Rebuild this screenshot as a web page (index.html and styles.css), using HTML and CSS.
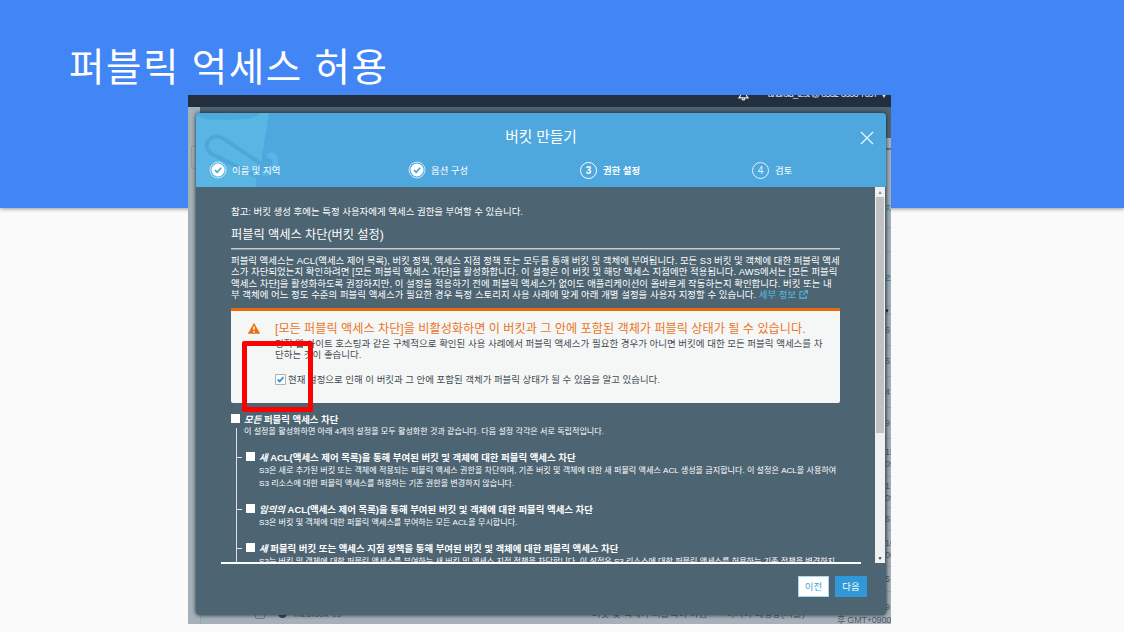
FILE: index.html
```html
<!DOCTYPE html>
<html lang="ko">
<head>
<meta charset="utf-8">
<title>퍼블릭 억세스 허용</title>
<link rel="stylesheet" href="styles.css">
</head>
<body>
<main class="slide">
  <header class="banner"><h1>퍼블릭 억세스 허용</h1></header>
  <section class="shot">
    <div class="topbar">
      <svg class="bell" viewBox="0 0 12 12"><path d="M1 7.5h10L9.3 5V1H2.7v4zM4.3 8.5a1.8 1.8 0 0 0 3.4 0" fill="none" stroke="#e6eaec" stroke-width="1.3"/></svg>
      <span class="account">android_test @ 8532-6836-7697</span><span class="caret">▼</span>
    </div>
    <div class="backdrop">
      <i class="shade"></i><i class="panel-edge"></i><i class="right-strip"></i><i class="blue-edge"></i><i class="left-control"></i>
      <div class="right-cells">
        <span class="link">지</span><span></span><span class="link">리전</span><span class="dark">▾</span><span>6</span><span>6</span><span>4</span><span>9</span><span>15<br>09</span><span>17<br>09</span><span>6</span><span>16<br>00</span><span>5</span><span>9</span>
      </div>
      <div class="bottom-row">
        <i class="row-check"></i><i class="row-bucket"></i><span class="row-name">mzblock-cs</span><span class="row-access">버킷 및 객체가 퍼블릭이 아님</span><span class="row-region">아시아 태평양(서울)</span><span class="row-time">후 GMT+0900</span>
      </div>
    </div>
    <div class="modal">
      <div class="modal-head">
        <svg class="bucket" viewBox="0 0 90 74">
          <path d="M0 0h73L65 50 60 64v10H0z" fill="#58b5e4"/>
          <path d="M0 0h63v2Q52 7 30 7 9 7 1 3z" fill="#4faadc"/>
          <path d="M64 50 28 26Q19 20 13 27T16 41L60 63" fill="none" stroke="#4da8da" stroke-width="4"/>
          <path d="M72 44q8-5 7 8 0 9-13 8" fill="none" stroke="#58b5e4" stroke-width="6"/>
        </svg>
        <h2>버킷 만들기</h2>
        <svg class="close" viewBox="0 0 14 14"><path d="m1 1 12 12M13 1 1 13" stroke="#e9f5fc" stroke-width="1.3"/></svg>
        <nav class="steps">
          <div class="step"><svg viewBox="0 0 18 18"><circle cx="9" cy="9" r="8" fill="none" stroke="#c8e6f7"/><circle cx="9" cy="9" r="6.5" fill="#fff"/><path d="m6 9 2.2 2.3 4-4.6" fill="none" stroke="#44a5dc" stroke-width="1.6"/></svg><span>이름 및 지역</span></div>
          <div class="step"><svg viewBox="0 0 18 18"><circle cx="9" cy="9" r="8" fill="none" stroke="#c8e6f7"/><circle cx="9" cy="9" r="6.5" fill="#fff"/><path d="m6 9 2.2 2.3 4-4.6" fill="none" stroke="#44a5dc" stroke-width="1.6"/></svg><span>옵션 구성</span></div>
          <div class="step current"><b>3</b><span>권한 설정</span></div>
          <div class="step upcoming"><b>4</b><span>검토</span></div>
        </nav>
      </div>
      <div class="modal-body">
        <div class="content">
          <p class="note">참고: 버킷 생성 후에는 특정 사용자에게 액세스 권한을 부여할 수 있습니다.</p>
          <h3>퍼블릭 액세스 차단(버킷 설정)</h3>
          <p class="intro">퍼블릭 액세스는 ACL(액세스 제어 목록), 버킷 정책, 액세스 지점 정책 또는 모두를 통해 버킷 및 객체에 부여됩니다. 모든 S3 버킷 및 객체에 대한 퍼블릭 액세<br><span class="wide">스가 차단되었는지 확인하려면 [모든 퍼블릭 액세스 차단]을 활성화합니다. 이 설정은 이 버킷 및 해당 액세스 지점에만 적용됩니다. AWS에서는 [모든 퍼블릭<br>액세스 차단]을 활성화하도록 권장하지만, 이 설정을 적용하기 전에 퍼블릭 액세스가 없이도 애플리케이션이 올바르게 작동하는지 확인합니다. 버킷 또는 내<br>부 객체에 어느 정도 수준의 퍼블릭 액세스가 필요한 경우 특정 스토리지 사용 사례에 맞게 아래 개별 설정을 사용자 지정할 수 있습니다.</span> <a>세부 정보 <svg viewBox="0 0 10 10"><path d="M5 2H1v7h7V6M6 .8h3.3v3.3M9 1 4.3 5.7" fill="none" stroke="#4fc0e4" stroke-width="1.2"/></svg></a></p>
          <div class="alert">
            <svg class="warn" viewBox="0 0 12 11"><path d="M6 .3 11.8 10.6H.2z" fill="#eb6f16" stroke="#eb6f16" stroke-width=".5" stroke-linejoin="round"/><path d="M6 3.6v3.5M6 8v1.5" stroke="#fff" stroke-width="1.4"/></svg>
            <div class="alert-text">
              <h4>[모든 퍼블릭 액세스 차단]을 비활성화하면 이 버킷과 그 안에 포함된 객체가 퍼블릭 상태가 될 수 있습니다.</h4>
              <p>정적 웹 사이트 호스팅과 같은 구체적으로 확인된 사용 사례에서 퍼블릭 액세스가 필요한 경우가 아니면 버킷에 대한 모든 퍼블릭 액세스를 차<br>단하는 것이 좋습니다.</p>
              <label class="ack"><svg viewBox="0 0 11 11"><path d="M.5.5h10v10H.5z" fill="#fff" stroke="#a9b3b9"/><path d="m2.7 5.5 2 2 3.7-4.3" fill="none" stroke="#2a93d5" stroke-width="1.8"/></svg><span>현재 설정으로 인해 이 버킷과 그 안에 포함된 객체가 퍼블릭 상태가 될 수 있음을 알고 있습니다.</span></label>
            </div>
          </div>
          <div class="option root"><i class="box"></i><div><h5><em>모든</em> 퍼블릭 액세스 차단</h5><p>이 설정을 활성화하면 아래 4개의 설정을 모두 활성화한 것과 같습니다. 다음 설정 각각은 서로 독립적입니다.</p></div></div>
          <div class="tree">
            <div class="option first"><i class="box"></i><div><h5><em>새</em> ACL(액세스 제어 목록)을 통해 부여된 버킷 및 객체에 대한 퍼블릭 액세스 차단</h5><p>S3은 새로 추가된 버킷 또는 객체에 적용되는 퍼블릭 액세스 권한을 차단하며, 기존 버킷 및 객체에 대한 새 퍼블릭 액세스 ACL 생성을 금지합니다. 이 설정은 ACL을 사용하여<br>S3 리소스에 대한 퍼블릭 액세스를 허용하는 기존 권한을 변경하지 않습니다.</p></div></div>
            <div class="option second"><i class="box"></i><div><h5><em>임의의</em> ACL(액세스 제어 목록)을 통해 부여된 버킷 및 객체에 대한 퍼블릭 액세스 차단</h5><p>S3은 버킷 및 객체에 대한 퍼블릭 액세스를 부여하는 모든 ACL을 무시합니다.</p></div></div>
            <div class="option third"><i class="box"></i><div><h5><em>새</em> 퍼블릭 버킷 또는 액세스 지점 정책을 통해 부여된 버킷 및 객체에 대한 퍼블릭 액세스 차단</h5><p>S3는 버킷 및 객체에 대한 퍼블릭 액세스를 부여하는 새 버킷 및 액세스 지점 정책을 차단합니다. 이 설정은 S3 리소스에 대한 퍼블릭 액세스를 허용하는 기존 정책을 변경하지</p></div></div>
          </div>
        </div>
        <div class="scrollbar"><span>▲</span><i></i><span class="down">▼</span></div>
      </div>
      <footer><span class="btn">이전</span><span class="btn primary">다음</span></footer>
    </div>
    <div class="highlight"></div>
  </section>
</main>
</body>
</html>
```
FILE: styles.css
```css
* { box-sizing: border-box; }
body { margin: 0; font-family: "Liberation Sans", "Noto Sans CJK KR", sans-serif; }
h1, h2, h3, h4, h5, p { margin: 0; font-weight: 400; white-space: nowrap; }
svg { display: block; flex: none; }
i { display: block; font-style: normal; }

.slide { position: relative; width: 1124px; height: 632px; overflow: hidden; background: #fafafa; }
.banner { height: 208px; padding: 34px 0 0 69px; background: #4285f4; color: #fff; box-shadow: 0 1px 4px rgba(0,0,0,.4); }
.banner h1 { font-size: 38.6px; line-height: 60px; letter-spacing: 1.5px; word-spacing: -.5px; font-family: "Noto Sans CJK KR", sans-serif; }

.shot { position: absolute; left: 188px; top: 95px; width: 703px; height: 529px; overflow: hidden; background: #a5b1b9; }
.topbar { height: 12px; display: flex; background: #232f3e; color: #e6eaec; font-size: 9px; line-height: 12px; overflow: hidden; }
.bell { width: 11px; height: 11px; margin: -4px 19px 0 550px; }
.account { width: 113px; margin-top: -7px; white-space: nowrap; letter-spacing: -.7px; }
.caret { margin: -5px 0 0; font-size: 6px; }

.backdrop { position: relative; height: 517px; }
.shade { position: absolute; left: 12px; right: 0; top: 0; height: 31px; background: #4d6472; }
.panel-edge { position: absolute; left: 12px; top: 30px; bottom: 0; border-left: 1px solid #98a5ac; }
.right-strip { position: absolute; right: 0; top: 31px; width: 6px; height: 10px; background: #aab5bb; }
.blue-edge { position: absolute; right: 0; top: 41px; width: 6px; height: 2px; background: #3b83a7; }
.left-control { position: absolute; left: 3px; top: 38px; width: 9px; height: 24px; border: 1px solid #8f9ca4; border-radius: 3px; }
.right-cells { position: absolute; left: 697px; top: 83px; width: 6px; display: grid; grid-template-rows: 38px 24px 55px 8px 31px 31px 31px 31px 38px 31px 23px 36px 25px 31px; color: #4f5961; font-size: 9px; line-height: 12px; overflow: hidden; }
.right-cells span { display: flex; align-items: center; border-bottom: 1px solid #929ea6; white-space: nowrap; }
.right-cells .link { color: #287e9f; }
.right-cells .dark { color: #111; font-size: 7px; }
.bottom-row { position: absolute; left: 0; right: 0; bottom: 0; height: 20px; overflow: hidden; display: flex; color: #4c5962; font-size: 9.5px; line-height: 12px; white-space: nowrap; }
.row-check { width: 10px; height: 10px; margin: 5px 12px 0 67px; border: 1px solid #75828b; border-radius: 2px; }
.row-bucket { width: 9px; height: 9px; margin: 5px 7px 0 1px; border-radius: 2px 2px 5px 5px; background: #39444d; }
.row-name { width: 301px; margin-top: 4px; }
.row-access { width: 137px; margin-top: 4px; padding-left: 3px; }
.row-region { width: 108px; margin-top: 4px; padding-left: 3px; }
.row-time { margin: 10px 0 0 8px; font-size: 9px; letter-spacing: -.2px; }

.modal { position: absolute; left: 8px; top: 18px; width: 690px; height: 502px; display: flex; flex-direction: column; background: #4d6472; border-radius: 4px; overflow: hidden; box-shadow: 0 0 4px #17232c; color: #fff; }
.modal-head { position: relative; height: 74px; background: #4ea8dd; }
.bucket { position: absolute; left: 0; top: 0; width: 90px; height: 74px; }
.modal-head h2 { position: relative; padding-top: 13px; text-align: center; font-size: 14.7px; line-height: 22px; }
.close { position: absolute; left: 664px; top: 18px; width: 14px; height: 14px; }
.steps { position: relative; display: grid; grid-template-columns: 199px 172px 173px 1fr; margin: 13px 0 0 13px; }
.step { display: flex; align-items: center; gap: 6px; height: 18px; font-size: 9.4px; white-space: nowrap; }
.step svg { width: 18px; height: 18px; margin-right: -1px; }
.step b { width: 17px; height: 17px; border: 1px solid; border-radius: 50%; font-size: 10px; line-height: 15px; text-align: center; }
.current { font-weight: 700; }
.upcoming b { font-weight: 400; opacity: .85; }
.step:nth-child(-n+2) { gap: 6px; }
.upcoming { margin-left: -1px; }

.modal-body { display: grid; grid-template-columns: 644px 1fr 11px; height: 376px; }
.content { height: 376px; padding: 18px 0 0 35px; overflow: hidden; }
.scrollbar { grid-column: 3; width: 10px; display: flex; flex-direction: column; align-items: center; background: #f0f0f0; color: #858585; font-size: 5px; line-height: 10px; }
.scrollbar i { width: 8px; height: 236px; background: #c1c1c1; }
.scrollbar .down { margin-top: auto; color: #333; }
.note { font-size: 9.45px; line-height: 14px; }
h3 { width: 609px; height: 30px; padding-top: 6px; border-bottom: 1px solid #c9cdd0; box-shadow: 0 1px #89969e; font-size: 12.2px; line-height: 20px; }
.intro { margin-top: 6px; font-size: 9.41px; line-height: 11.35px; }
.wide { letter-spacing: .04px; }
.intro a { color: #4fc0e4; }
.intro svg { display: inline-block; width: 9px; height: 9px; vertical-align: -1px; }
.alert { width: 609px; height: 95px; display: flex; gap: 15px; margin-top: 7.6px; padding: 9px 0 0 17px; background: #f5f7f7; border-top: 3px solid #eb6b0a; border-radius: 0 0 2px 2px; color: #434b50; }
.warn { width: 12px; height: 11px; margin-top: 3px; }
.alert h4 { color: #eb7423; font-size: 12.17px; line-height: 18px; }
.alert p { font-size: 9.49px; line-height: 11.5px; }
.ack { display: flex; align-items: center; gap: 2px; height: 12px; margin-top: 13px; font-size: 9.45px; line-height: 12px; white-space: nowrap; }
.ack svg { width: 11px; height: 11px; }
.option { display: flex; gap: 4px; }
.box { flex: none; width: 9px; height: 9px; margin-top: 1px; background: #fff; }
.option h5 { font-size: 9.42px; line-height: 13px; font-weight: 700; }
.option p { font-size: 8.09px; line-height: 13px; }
.root { height: 15px; margin-top: 10px; }
.root p { margin-top: -1px; }
.tree { position: relative; height: 150px; margin-left: 5px; padding: 23px 0 0 9px; border-left: 1px solid #dce2e5; }
.tree .option { position: relative; height: 52px; }
.tree .second { height: 39px; }
.tree .option::before { content: ""; position: absolute; left: -9px; top: 6px; width: 5px; height: 1px; background: #dce2e5; }

footer { display: flex; justify-content: flex-end; gap: 6px; height: 52px; margin: 0 19px 0 25px; padding: 13px 0 0; position: relative; }
footer::before { content: ""; position: absolute; left: 0; right: 6px; top: -1px; height: 1.5px; background: #fff; }
.btn { width: 31px; height: 21px; background: #fff; border: 1px solid #a9d6f2; color: #479fd2; font-size: 9.4px; line-height: 19px; text-align: center; }
.primary { width: 32px; background: #3198d8; border-color: #3198d8; color: #fff; }
.highlight { position: absolute; left: 54px; top: 246px; width: 71px; height: 71px; border: 5px solid #f00; border-radius: 2px; }
```
